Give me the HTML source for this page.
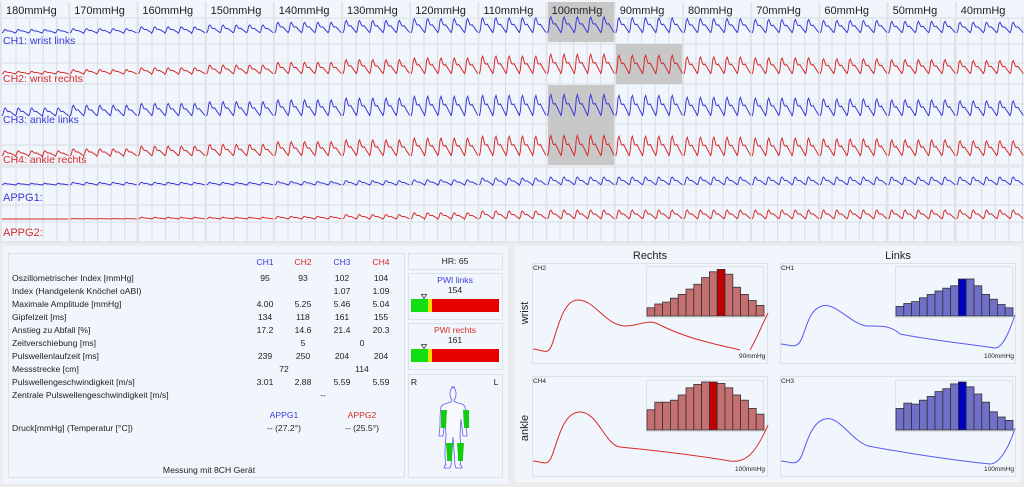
<!DOCTYPE html>
<html><head><meta charset="utf-8"><style>
body{margin:0;width:1024px;height:487px;overflow:hidden;background:#ececec;font-family:"Liberation Sans",sans-serif}
svg{position:absolute;left:0;top:0}
</style></head><body>
<svg id="s" width="1024" height="487" xmlns="http://www.w3.org/2000/svg" font-family="Liberation Sans, sans-serif">
<rect x="0" y="0" width="1024" height="242" fill="#f1f6fc"/>
<g id="grid"></g>
<g id="hl" fill="#c8c8c8">
<rect x="548" y="2" width="66" height="40"/>
<rect x="616" y="44" width="66" height="40"/>
<rect x="548" y="85" width="66" height="80"/>
</g>
<g id="hdr" font-size="11" fill="#222"></g>
<g id="waves" fill="none" stroke-width="1"></g>
<g font-size="10.5">
<text x="3" y="44" fill="#3a3ad8">CH1: wrist links</text>
<text x="3" y="82" fill="#d82a2a">CH2: wrist rechts</text>
<text x="3" y="123" fill="#3a3ad8">CH3: ankle links</text>
<text x="3" y="163" fill="#d82a2a">CH4: ankle rechts</text>
<text x="3" y="201" fill="#3a3ad8" font-size="11">APPG1:</text>
<text x="3" y="236" fill="#d82a2a" font-size="11">APPG2:</text>
</g>
<rect x="3" y="246" width="505" height="238" fill="#f1f6fc"/>
<rect x="8.5" y="253.5" width="396" height="224" fill="#f1f6fc" stroke="#dde2e8"/>
<g font-size="8.6" fill="#222">
<g text-anchor="middle">
<text x="265" y="265" fill="#3a3ad8">CH1</text><text x="303" y="265" fill="#d82a2a">CH2</text><text x="342" y="265" fill="#3a3ad8">CH3</text><text x="381" y="265" fill="#d82a2a">CH4</text>
<text x="265" y="281">95</text><text x="303" y="281">93</text><text x="342" y="281">102</text><text x="381" y="281">104</text>
<text x="342" y="294">1.07</text><text x="381" y="294">1.09</text>
<text x="265" y="307">4.00</text><text x="303" y="307">5.25</text><text x="342" y="307">5.46</text><text x="381" y="307">5.04</text>
<text x="265" y="320">134</text><text x="303" y="320">118</text><text x="342" y="320">161</text><text x="381" y="320">155</text>
<text x="265" y="333">17.2</text><text x="303" y="333">14.6</text><text x="342" y="333">21.4</text><text x="381" y="333">20.3</text>
<text x="303" y="346">5</text><text x="362" y="346">0</text>
<text x="265" y="359">239</text><text x="303" y="359">250</text><text x="342" y="359">204</text><text x="381" y="359">204</text>
<text x="284" y="372">72</text><text x="362" y="372">114</text>
<text x="265" y="385">3.01</text><text x="303" y="385">2.88</text><text x="342" y="385">5.59</text><text x="381" y="385">5.59</text>
<text x="323" y="398">--</text>
<text x="284" y="418" fill="#3a3ad8">APPG1</text><text x="362" y="418" fill="#d82a2a">APPG2</text>
<text x="284" y="431">-- (27.2°)</text><text x="362" y="431">-- (25.5°)</text>
<text x="209" y="473">Messung mit 8CH Gerät</text>
</g>
<text x="12" y="281">Oszillometrischer Index [mmHg]</text>
<text x="12" y="294">Index (Handgelenk Knöchel oABI)</text>
<text x="12" y="307">Maximale Amplitude [mmHg]</text>
<text x="12" y="320">Gipfelzeit [ms]</text>
<text x="12" y="333">Anstieg zu Abfall [%]</text>
<text x="12" y="346">Zeitverschiebung [ms]</text>
<text x="12" y="359">Pulswellenlaufzeit [ms]</text>
<text x="12" y="372">Messstrecke [cm]</text>
<text x="12" y="385">Pulswellengeschwindigkeit [m/s]</text>
<text x="12" y="398">Zentrale Pulswellengeschwindigkeit [m/s]</text>
<text x="12" y="431">Druck[mmHg] (Temperatur [°C])</text>
</g>
<g fill="#f1f6fc" stroke="#dde2e8">
<rect x="408.5" y="253.5" width="94" height="16"/>
<rect x="408.5" y="273.5" width="94" height="46"/>
<rect x="408.5" y="323.5" width="94" height="46"/>
<rect x="408.5" y="374.5" width="94" height="103"/>
</g>
<g font-size="8.6" text-anchor="middle" fill="#222">
<text x="455" y="264">HR:  65</text>
<text x="455" y="283" fill="#3a3ad8">PWI links</text><text x="455" y="293">154</text>
<text x="455" y="333" fill="#d82a2a">PWI rechts</text><text x="455" y="343">161</text>
<text x="414" y="385">R</text><text x="496" y="385">L</text>
</g>
<rect x="411" y="299" width="17" height="13" fill="#11dd11"/><rect x="428" y="299" width="4" height="13" fill="#f0e000"/><rect x="432" y="299" width="67" height="13" fill="#e60000"/>
<rect x="411" y="349" width="17" height="13" fill="#11dd11"/><rect x="428" y="349" width="4" height="13" fill="#f0e000"/><rect x="432" y="349" width="67" height="13" fill="#e60000"/>
<path d="M421.5 294.5h5l-2.5 4z M421.5 344.5h5l-2.5 4z" fill="#fff" stroke="#333" stroke-width="0.8"/>
<g stroke="#5a5af0" stroke-width="0.8" fill="#f8f8ff">
<path d="M455 387c-4 0-5 3-5 7 0 3 1 5 2 6 0 2-1 2-4 3-5 1-6 2-7 4-1 4-1 12-1 17 0 5-1 9-1 12h4l2-17 1 15c0 6-1 12-1 17 0 5 0 10 1 14h-1l-1 3h6l1-3 1-14 1-14 1 14 1 14 1 3h6l-1-3h-1c1-4 1-9 1-14 0-5-1-11-1-17l1-15 2 17h4c0-3-1-7-1-12 0-5 0-13-1-17-1-2-2-3-7-4-3-1-4-1-4-3 1-1 2-3 2-6 0-4-1-7-5-7z"/>
</g>
<g fill="#11cc11">
<path d="M441 410h6l-1 18h-5z"/><path d="M463 410h6v18h-5z"/>
<path d="M446 443h7l-1 14 0 4h-5l0-4z"/><path d="M457 443h7l-1 14 0 4h-5l0-4z"/>
</g>
<rect x="515" y="246" width="506" height="236" fill="#f1f6fc"/>
<text x="650" y="259" font-size="11" text-anchor="middle" fill="#222">Rechts</text>
<text x="898" y="259" font-size="11" text-anchor="middle" fill="#222">Links</text>
<g fill="#f1f6fc" stroke="#dde2e8">
<rect x="532.5" y="263.5" width="235" height="100"/><rect x="532.5" y="376.5" width="235" height="100"/>
<rect x="780.5" y="263.5" width="235" height="100"/><rect x="780.5" y="376.5" width="235" height="100"/>
<rect x="646.5" y="266.5" width="117" height="51"/><rect x="646.5" y="380.5" width="117" height="51"/>
<rect x="895.5" y="266.5" width="117" height="51"/><rect x="895.5" y="380.5" width="117" height="51"/>
</g>
<g font-size="6.5" fill="#222">
<text x="533" y="270">CH2</text><text x="533" y="383">CH4</text><text x="781" y="270">CH1</text><text x="781" y="383">CH3</text>
<text x="739" y="358">90mmHg</text><text x="735" y="471">100mmHg</text><text x="984" y="358">100mmHg</text><text x="984" y="471">100mmHg</text>
</g>
<text transform="translate(528,313) rotate(-90)" font-size="11" text-anchor="middle" fill="#222">wrist</text>
<text transform="translate(528,428) rotate(-90)" font-size="11" text-anchor="middle" fill="#222">ankle</text>
<g id="bars"></g>
<g fill="none" stroke-width="1">
<path stroke="#d82a2a" d="M533 349C543 350 547 355 551 347C557 333 562 300 578 300C595 300 605 325 625 326C640 326 648 318 660 325C690 340 720 345 740 350M750 350C757 338 762 325 768 313"/>
<path stroke="#d82a2a" d="M533 461C543 462 547 466 551 458C557 445 562 412 580 412C598 412 605 445 620 447C660 451 700 456 730 461C745 463 755 455 768 425"/>
<path stroke="#5a5af0" d="M781 344C791 345 797 350 802 338C808 322 810 310 822 306C835 302 850 323 866 326C880 326 890 325 900 334C930 340 960 343 995 348C1003 348 1010 330 1015 315"/>
<path stroke="#5a5af0" d="M781 461C791 462 797 467 802 455C808 438 812 425 822 420C838 412 850 440 868 446C900 452 950 460 990 464C1000 464 1010 445 1015 428"/>
</g>
</svg>
<script>
var NS="http://www.w3.org/2000/svg";
function el(p,t,a){var e=document.createElementNS(NS,t);for(var k in a)e.setAttribute(k,a[k]);document.getElementById(p).appendChild(e);return e;}
var g="";
for(var x=16;x<1024;x+=13.6){g+="M"+x.toFixed(1)+" 18V242";}
var hs=[18,44,63,84,104,124,145,165,185,205,222,242];
hs.forEach(function(y){g+="M0 "+y+"H1024";});
el("grid","path",{d:g,stroke:"#d6dce4","stroke-width":"1",fill:"none"});
el("grid","rect",{x:0,y:165,width:1024,height:3,fill:"#e6e9ee"});
var labs=["180","170","160","150","140","130","120","110","100","90","80","70","60","50","40"];
for(var i=0;i<15;i++){var x0=2+68.2*i;
 el("grid","path",{d:"M"+(x0-1)+" 2V242",stroke:"#e2e4e8","stroke-width":"2",fill:"none"});
 var t=el("hdr","text",{x:x0+4,y:14});t.textContent=labs[i]+"mmHg";}
function shape(t){
 if(t<0.05)return 0;
 if(t<0.2)return (t-0.05)/0.15;
 if(t<0.45)return 1-0.55*(t-0.2)/0.25;
 if(t<0.55)return 0.45+0.08*(t-0.45)/0.1;
 return 0.53*(1-(t-0.55)/0.45)+0.03;
}
function wave(base,amps,col){
 var d="";
 for(var i=0;i<15;i++){var x0=2+68.2*i;
  d+="M"+x0.toFixed(1)+" "+base;
  for(var b=0;b<5;b++){for(var s=0;s<=12;s++){var t=s/12;var x=x0+b*13.3+t*13.3;var y=base-amps[i]*shape(t);d+="L"+x.toFixed(1)+" "+y.toFixed(1);}}
 }
 el("waves","path",{d:d,stroke:col});
}
wave(33,[4,5,7,9,12,14,16,17,18,17,16,15,14,13,12],"#3a3ad8");
wave(74,[3,5,7,10,13,16,18,20,22,21,19,18,17,16,15],"#d82a2a");
wave(116,[9,12,14,16,18,20,22,23,24,23,21,20,19,18,17],"#3a3ad8");
wave(156,[6,8,11,13,16,18,20,22,23,22,21,20,19,18,17],"#d82a2a");
wave(185,[2,3,3,3,4,5,6,8,9,9,9,9,9,9,9],"#3a3ad8");
wave(219,[0,0.5,2,2,3,5,7,9,10,10,10,10,10,10,10],"#d82a2a");
function bars(x0,bottom,h,hs,hi,fc,hc){
 var w=7.8;for(var i=0;i<hs.length;i++){var bh=hs[i]*h;
 el("bars","rect",{x:(x0+i*w).toFixed(1),y:(bottom-bh).toFixed(1),width:w.toFixed(1),height:bh.toFixed(1),fill:i==hi?hc:fc,stroke:"#333","stroke-width":"0.8"});}
}
bars(647,316,48,[.17,.25,.29,.37,.45,.56,.66,.80,.92,.97,.87,.60,.45,.32,.22],9,"#c57070","#c00000");
bars(647,430,48,[.42,.58,.58,.62,.73,.88,.95,1,1,.97,.88,.73,.62,.45,.33],8,"#c57070","#c00000");
bars(896,316,48,[.2,.26,.3,.38,.45,.52,.58,.63,.77,.77,.63,.45,.35,.24,.17],8,"#7070c8","#0000c0");
bars(896,430,48,[.45,.56,.54,.62,.7,.8,.86,.96,1,.9,.75,.58,.38,.27,.2],8,"#7070c8","#0000c0");
</script>
</body></html>
